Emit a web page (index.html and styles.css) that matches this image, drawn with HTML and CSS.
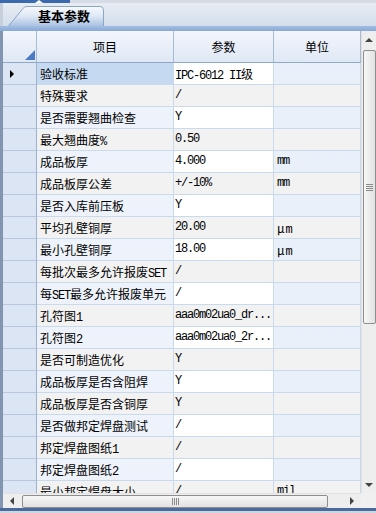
FILE: index.html
```html
<!DOCTYPE html>
<html lang="zh-CN">
<head>
	<meta charset="UTF-8">
	<title>基本参数</title>
	<link rel="stylesheet" href="styles.css">
</head>
<body>
	<div class="app">
		<div class="topline"><span class="accent"></span></div>
		<div class="tabbar">
			<div class="tab">
				<svg width="96" height="20" viewBox="0 0 96 20">
					<defs>
						<linearGradient id="tabfill" x1="0" y1="0" x2="0" y2="1">
							<stop offset="0" stop-color="#f8fafd"/>
							<stop offset="0.5" stop-color="#dde7f4"/>
							<stop offset="1" stop-color="#a9c2e4"/>
						</linearGradient>
					</defs>
					<path d="M0.5 20 L15 2.5 Q16.5 0.5 19 0.5 L92 0.5 Q95.5 0.5 95.5 4 L95.5 20" fill="url(#tabfill)" stroke="#8da5c4"/>
				</svg>
				<span class="tab-label">基本参数</span>
			</div>
		</div>
		<div class="band"></div>
		<div class="body">
			<div class="main">
				<div class="grid">
					<div class="row head">
						<div class="cell rh"><span class="corner"></span></div>
						<div class="cell c1">项目</div>
						<div class="cell c2">参数</div>
						<div class="cell c3">单位</div>
					</div>
					<div class="row sel">
						<div class="cell rh"><span class="pointer"></span></div>
						<div class="cell c1">验收标准</div>
						<div class="cell c2">IPC-6012 II<span class="cjk">级</span></div>
						<div class="cell c3"></div>
					</div>
					<div class="row alt">
						<div class="cell rh"></div>
						<div class="cell c1">特殊要求</div>
						<div class="cell c2">/</div>
						<div class="cell c3"></div>
					</div>
					<div class="row">
						<div class="cell rh"></div>
						<div class="cell c1">是否需要翘曲检查</div>
						<div class="cell c2">Y</div>
						<div class="cell c3"></div>
					</div>
					<div class="row alt">
						<div class="cell rh"></div>
						<div class="cell c1">最大翘曲度<span class="a">%</span></div>
						<div class="cell c2">0.50</div>
						<div class="cell c3"></div>
					</div>
					<div class="row">
						<div class="cell rh"></div>
						<div class="cell c1">成品板厚</div>
						<div class="cell c2">4.000</div>
						<div class="cell c3">mm</div>
					</div>
					<div class="row alt">
						<div class="cell rh"></div>
						<div class="cell c1">成品板厚公差</div>
						<div class="cell c2">+/-10%</div>
						<div class="cell c3">mm</div>
					</div>
					<div class="row">
						<div class="cell rh"></div>
						<div class="cell c1">是否入库前压板</div>
						<div class="cell c2">Y</div>
						<div class="cell c3"></div>
					</div>
					<div class="row alt">
						<div class="cell rh"></div>
						<div class="cell c1">平均孔壁铜厚</div>
						<div class="cell c2">20.00</div>
						<div class="cell c3"><span class="mu">μ</span>m</div>
					</div>
					<div class="row">
						<div class="cell rh"></div>
						<div class="cell c1">最小孔壁铜厚</div>
						<div class="cell c2">18.00</div>
						<div class="cell c3"><span class="mu">μ</span>m</div>
					</div>
					<div class="row alt">
						<div class="cell rh"></div>
						<div class="cell c1">每批次最多允许报废<span class="a">SET</span></div>
						<div class="cell c2">/</div>
						<div class="cell c3"></div>
					</div>
					<div class="row">
						<div class="cell rh"></div>
						<div class="cell c1">每<span class="a">SET</span>最多允许报废单元</div>
						<div class="cell c2">/</div>
						<div class="cell c3"></div>
					</div>
					<div class="row alt">
						<div class="cell rh"></div>
						<div class="cell c1">孔符图<span class="a">1</span></div>
						<div class="cell c2">aaa0m02ua0_dr...</div>
						<div class="cell c3"></div>
					</div>
					<div class="row">
						<div class="cell rh"></div>
						<div class="cell c1">孔符图<span class="a">2</span></div>
						<div class="cell c2">aaa0m02ua0_2r...</div>
						<div class="cell c3"></div>
					</div>
					<div class="row alt">
						<div class="cell rh"></div>
						<div class="cell c1">是否可制造优化</div>
						<div class="cell c2">Y</div>
						<div class="cell c3"></div>
					</div>
					<div class="row">
						<div class="cell rh"></div>
						<div class="cell c1">成品板厚是否含阻焊</div>
						<div class="cell c2">Y</div>
						<div class="cell c3"></div>
					</div>
					<div class="row alt">
						<div class="cell rh"></div>
						<div class="cell c1">成品板厚是否含铜厚</div>
						<div class="cell c2">Y</div>
						<div class="cell c3"></div>
					</div>
					<div class="row">
						<div class="cell rh"></div>
						<div class="cell c1">是否做邦定焊盘测试</div>
						<div class="cell c2">/</div>
						<div class="cell c3"></div>
					</div>
					<div class="row alt">
						<div class="cell rh"></div>
						<div class="cell c1">邦定焊盘图纸<span class="a">1</span></div>
						<div class="cell c2">/</div>
						<div class="cell c3"></div>
					</div>
					<div class="row">
						<div class="cell rh"></div>
						<div class="cell c1">邦定焊盘图纸<span class="a">2</span></div>
						<div class="cell c2">/</div>
						<div class="cell c3"></div>
					</div>
					<div class="row alt">
						<div class="cell rh"></div>
						<div class="cell c1">最小邦定焊盘大小</div>
						<div class="cell c2">/</div>
						<div class="cell c3">mil</div>
					</div>
				</div>
				<div class="hscroll">
					<div class="hbtn"><span class="arr-left"></span></div>
					<div class="hthumb"><span class="grip-v"></span></div>
					<div class="hbtn right"><span class="arr-right"></span></div>
				</div>
			</div>
			<div class="vscroll">
				<div class="vtrack">
					<div class="vbtn"><span class="arr-up"></span></div>
					<div class="vthumb"><span class="grip-h"></span></div>
					<div class="vspace"></div>
					<div class="vbtn"><span class="arr-down"></span></div>
				</div>
				<div class="sizer"></div>
			</div>
		</div>
		<div class="bottom"></div>
	</div>
</body>
</html>
```

FILE: styles.css
```css
* {
	box-sizing: border-box;
}
body {
	margin: 0;
	font-family: "Noto Sans CJK SC", sans-serif;
	font-size: 12px;
	color: #000;
}
.app {
	width: 376px;
	height: 513px;
	display: flex;
	flex-direction: column;
	overflow: hidden;
	background: #dfe6ef;
}
.topline {
	height: 3px;
	display: flex;
	background: #d5dce6;
}
.topline .accent {
	position: relative;
	width: 70px;
	background: #3a69ae;
}
.topline .accent::after {
	content: "";
	position: absolute;
	left: 35px;
	top: 0;
	border-left: 4px solid transparent;
	border-right: 4px solid transparent;
	border-bottom: 3px solid #fff;
}
.tabbar {
	height: 23px;
	display: flex;
	align-items: flex-end;
	padding-left: 8px;
	background: linear-gradient(#e8ecf2, #d3deec);
	border-left: 3px solid #c7cfda;
}
.tab {
	position: relative;
	width: 96px;
	height: 20px;
	margin-left: -3px;
}
.tab svg {
	position: absolute;
	left: 0;
	top: 0;
}
.tab-label {
	position: relative;
	display: block;
	padding-left: 30px;
	font-size: 13px;
	font-weight: bold;
	line-height: 20px;
}
.band {
	height: 5px;
	background: linear-gradient(#a3bde2, #8aa9d6);
}
.body {
	flex: 1;
	display: flex;
	min-height: 0;
}
.main {
	width: 361px;
	display: flex;
	flex-direction: column;
	border-left: 3px solid #8295b0;
}
.grid {
	flex: 1;
	overflow: hidden;
	background: #fff;
}
.row {
	display: flex;
	height: 22px;
}
.cell {
	height: 100%;
	overflow: hidden;
	white-space: nowrap;
	line-height: 21px;
	border-right: 1px solid #c9d9ee;
	border-bottom: 1px solid #c9d9ee;
}
.rh {
	width: 34px;
	background: #dbe5f3;
	border-right-color: #9bb1cd;
	border-bottom-color: #b6c7de;
}
.c1 {
	width: 137px;
	padding-left: 3px;
	background: #eef3fb;
}
.c2 {
	width: 100px;
	padding-left: 1px;
	font-family: "Liberation Mono", monospace;
	font-size: 12px;
	letter-spacing: -1.2px;
	background: #fff;
}
.c3 {
	width: 87px;
	padding-left: 3px;
	font-family: "Liberation Mono", monospace;
	font-size: 12px;
	letter-spacing: -1.2px;
	background: #e9f0fa;
}
.row.alt .c1,
.row.alt .c2,
.row.alt .c3 {
	background: #f2f2f2;
}
.row.sel .c1 {
	background: #c5d9f1;
}
.a {
	font-family: "Liberation Mono", monospace;
	font-size: 12px;
	letter-spacing: -1.2px;
}
.cjk,
.mu {
	font-family: "Noto Sans CJK SC", sans-serif;
	font-size: 12px;
	letter-spacing: 0;
}
.mu {
	margin-right: 1px;
}
.head {
	height: 32px;
}
.head .cell {
	line-height: 31px;
	text-align: center;
	font-family: "Noto Sans CJK SC", sans-serif;
	font-size: 12px;
	letter-spacing: 0;
	padding-left: 0;
	background: linear-gradient(#f3f6fb, #dfe8f5);
	border-right-color: #a7bbd5;
	border-bottom-color: #8fa8c9;
}
.head .rh {
	display: flex;
	align-items: flex-end;
	justify-content: flex-end;
	padding: 0 1px 2px 0;
}
.corner {
	width: 0;
	height: 0;
	border-left: 10px solid transparent;
	border-bottom: 10px solid #4a7bc4;
}
.sel .rh {
	display: flex;
	align-items: center;
	padding-left: 7px;
}
.pointer {
	width: 0;
	height: 0;
	border-left: 4px solid #000;
	border-top: 4px solid transparent;
	border-bottom: 4px solid transparent;
}
.hscroll {
	height: 15px;
	display: flex;
	align-items: center;
	background: #eeeeee;
	border-top: 1px solid #e2e2e2;
}
.hbtn {
	width: 18px;
	height: 100%;
	display: flex;
	align-items: center;
	justify-content: center;
}
.hbtn.right {
	width: 19px;
	margin-left: auto;
}
.hthumb {
	width: 306px;
	height: 13px;
	margin-left: 1px;
	display: flex;
	align-items: center;
	justify-content: center;
	border: 1px solid #8e8e8e;
	border-radius: 2px;
	background: linear-gradient(#f7f7f7, #e2e2e2);
}
.grip-v {
	width: 7px;
	height: 7px;
	background: repeating-linear-gradient(to right, #8a8a8a 0 1px, transparent 1px 2px);
}
.vscroll {
	width: 15px;
	display: flex;
	flex-direction: column;
}
.vtrack {
	flex: 1;
	display: flex;
	flex-direction: column;
	align-items: center;
	background: #eeeeee;
	border-left: 1px solid #e0e0e0;
}
.vbtn {
	height: 17px;
	width: 100%;
	display: flex;
	align-items: center;
	justify-content: center;
}
.vthumb {
	width: 13px;
	height: 274px;
	margin-top: 2px;
	display: flex;
	align-items: center;
	justify-content: center;
	border: 1px solid #8e8e8e;
	border-radius: 2px;
	background: linear-gradient(to right, #f7f7f7, #e2e2e2);
}
.grip-h {
	width: 7px;
	height: 7px;
	background: repeating-linear-gradient(#8a8a8a 0 1px, transparent 1px 2px);
}
.vspace {
	flex: 1;
}
.sizer {
	height: 15px;
	background: #f0f0f0;
}
.arr-up {
	border-left: 4px solid transparent;
	border-right: 4px solid transparent;
	border-bottom: 4px solid #444;
}
.arr-down {
	border-left: 4px solid transparent;
	border-right: 4px solid transparent;
	border-top: 4px solid #444;
}
.arr-left {
	border-top: 4px solid transparent;
	border-bottom: 4px solid transparent;
	border-right: 4px solid #444;
}
.arr-right {
	border-top: 4px solid transparent;
	border-bottom: 4px solid transparent;
	border-left: 4px solid #444;
}
.bottom {
	height: 5px;
	background: linear-gradient(#4a6a9b 0 3px, #cdd7e4 3px);
}
```
